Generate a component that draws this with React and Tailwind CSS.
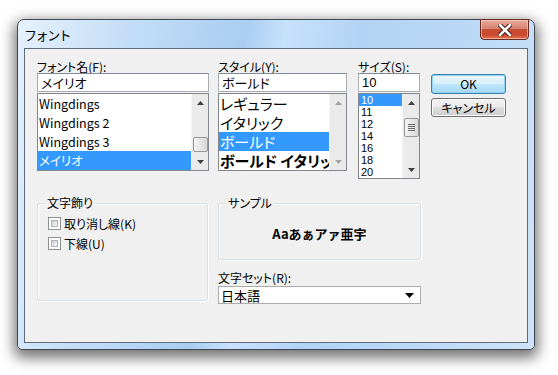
import React from "react";

const F = { fontFamily: '"Noto Sans CJK JP", "Noto Sans", sans-serif' };
const NUM = { fontFamily: '"Liberation Sans", "Noto Sans CJK JP", sans-serif' };

function Arrow({ dir = "up", color = "#404040" }) {
  return (
    <svg width="7" height="4" viewBox="0 0 7 4" className="block">
      {dir === "up" ? (
        <polygon points="0,4 7,4 3.5,0" fill={color} />
      ) : (
        <polygon points="0,0 7,0 3.5,4" fill={color} />
      )}
    </svg>
  );
}

function ScrollBar({ thumbTop, thumbH, grip = false, disabled = false }) {
  const c = disabled ? "#a3a3a3" : "#404040";
  return (
    <div className="relative w-[17px] h-full bg-[#eaeaea] border-l border-[#f4f4f4] flex flex-col justify-between">
      <div className="h-[17px] flex items-center justify-center">
        <Arrow dir="up" color={c} />
      </div>
      <div className="h-[17px] flex items-center justify-center">
        <Arrow dir="down" color={c} />
      </div>
      {thumbH ? (
        <div
          className="absolute left-[1px] w-[15px] rounded-[2px] border border-[#979797] bg-gradient-to-r from-[#f4f4f4] to-[#d8d8d8] flex flex-col items-center justify-center gap-[1px]"
          style={{ top: thumbTop, height: thumbH }}
        >
          {grip && (
            <>
              <div className="w-[7px] h-[1px] bg-[#6a6a6a]" />
              <div className="w-[7px] h-[1px] bg-[#6a6a6a]" />
              <div className="w-[7px] h-[1px] bg-[#6a6a6a]" />
              <div className="w-[7px] h-[1px] bg-[#6a6a6a]" />
            </>
          )}
        </div>
      ) : null}
    </div>
  );
}

function Input({ value, w, num = false }) {
  return (
    <div
      className="h-[19px] border border-[#abadb3] border-t-[#7a8b9c] bg-white flex items-center pl-[3px] text-[13px] leading-none text-black"
      style={{ width: w, ...(num ? NUM : {}) }}
    >
      {value}
    </div>
  );
}

function Check({ label }) {
  return (
    <div className="flex items-center gap-[3px] h-[13px]">
      <div className="w-[13px] h-[13px] border border-[#8e8f8f] bg-white p-[2px]">
        <div className="w-full h-full bg-gradient-to-br from-[#cbcfd5] to-[#f6f6f6] border border-[#aeb3b9]" />
      </div>
      <span className="text-[12px] leading-none text-black">{label}</span>
    </div>
  );
}

function GroupBox({ label, w, h, children }) {
  return (
    <div
      className="relative rounded-[3px] border border-[#d5dfe5] shadow-[inset_1px_1px_0_#ffffff,1px_1px_0_#ffffff]"
      style={{ width: w, height: h }}
    >
      <div className="absolute -top-[8px] left-[7px] px-[2px] bg-[#f0f0f0] text-[12px] leading-[14px] text-black">
        {label}
      </div>
      {children}
    </div>
  );
}

function Button({ children, def = false }) {
  return (
    <div
      className={
        "w-[75px] rounded-[3px] border flex items-center justify-center text-[12px] leading-none text-black " +
        (def
          ? "h-[20px] border-[#3c7fb1] bg-[linear-gradient(#eaf6fd_0%,#d9f0fc_50%,#bee6fd_50%,#a7d9f5_100%)] shadow-[inset_0_0_0_1px_#8fd3f5]"
          : "h-[19px] border-[#707070] bg-[linear-gradient(#f2f2f2_0%,#ebebeb_50%,#dddddd_50%,#cfcfcf_100%)] shadow-[inset_0_0_0_1px_#fcfcfc]")
      }
    >
      {children}
    </div>
  );
}

export default function App() {
  return (
    <div className="w-[558px] h-[375px] bg-white overflow-hidden [font-feature-settings:'palt']" style={F}>
      <div className="pl-[17px] pt-[19px]">
        <div className="relative w-[518px] h-[331px] rounded-t-[7px] rounded-b-[5px] border border-[#3e4752] bg-[linear-gradient(100deg,#e6f1fc_0%,#c6dff7_18%,#aacdf1_40%,#c8e1fb_47%,#b3d3f4_60%,#bcd9f6_80%,#cfe3f7_100%)] shadow-[0_5px_14px_3px_rgba(0,0,0,0.55)]">
          {/* title bar */}
          <div className="h-[28px] flex items-center pl-[7px]">
            <span className="text-[13px] leading-none text-black tracking-[1px]">フォント</span>
          </div>
          {/* close button */}
          <div className="absolute -top-[1px] right-[5px] w-[49px] h-[21px] rounded-b-[4px] border border-[#6b2b23] bg-[linear-gradient(#e9a99b_0%,#d98473_45%,#c74d33_50%,#cc4a2e_80%,#e07a5c_100%)] shadow-[inset_0_0_0_1px_rgba(255,220,210,0.55)] flex items-center justify-center">
            <svg width="14" height="12" viewBox="0 0 14 12">
              <path d="M2 1 L12 11 M12 1 L2 11" stroke="#4a1a12" strokeWidth="4.6" strokeLinecap="square" />
              <path d="M2 1 L12 11 M12 1 L2 11" stroke="#ffffff" strokeWidth="2.6" strokeLinecap="square" />
            </svg>
          </div>
          {/* client area */}
          <div className="mx-[6px] w-[504px] h-[295px] border border-[#5e6c7d] bg-[#f0f0f0] pl-[12px] pt-[11px] text-black">
            {/* row 1 */}
            <div className="flex items-start">
              {/* font name */}
              <div className="w-[172px] flex flex-col">
                <div className="h-[13px] text-[12px] leading-[13px]">フォント名(F):</div>
                <Input value="メイリオ" w={172} />
                <div className="mt-[1px] h-[78px] border border-[#828790] bg-white flex">
                  <div className="flex-1 flex flex-col text-[12.5px]">
                    <div className="h-[19px] leading-[19px] pl-[1px]">Wingdings</div>
                    <div className="h-[19px] leading-[19px] pl-[1px]">Wingdings 2</div>
                    <div className="h-[19px] leading-[19px] pl-[1px]">Wingdings 3</div>
                    <div className="h-[19px] leading-[19px] pl-[1px] bg-[#3399ff] text-white">メイリオ</div>
                  </div>
                  <ScrollBar thumbTop={43} thumbH={15} />
                </div>
              </div>
              {/* style */}
              <div className="ml-[9px] w-[129px] flex flex-col">
                <div className="h-[13px] text-[12px] leading-[13px]">スタイル(Y):</div>
                <Input value="ボールド" w={129} />
                <div className="mt-[1px] h-[78px] border border-[#828790] bg-white flex">
                  <div className="flex-1 min-w-0 flex flex-col text-[15px] overflow-hidden">
                    <div className="h-[19px] leading-[19px] pl-[1px] whitespace-nowrap">レギュラー</div>
                    <div className="h-[19px] leading-[19px] pl-[1px] whitespace-nowrap">イタリック</div>
                    <div className="h-[19px] leading-[19px] pl-[1px] whitespace-nowrap bg-[#3399ff] text-white">ボールド</div>
                    <div className="h-[19px] leading-[19px] pl-[1px] whitespace-nowrap font-bold">ボールド イタリック</div>
                  </div>
                  <ScrollBar disabled />
                </div>
              </div>
              {/* size */}
              <div className="ml-[11px] w-[62px] flex flex-col">
                <div className="h-[13px] text-[12px] leading-[13px]">サイズ(S):</div>
                <Input value="10" w={62} num />
                <div className="mt-[1px] h-[86px] border border-[#828790] bg-white flex">
                  <div className="flex-1 flex flex-col text-[11px]" style={NUM}>
                    <div className="h-[12px] leading-[12px] pl-[2px] bg-[#3399ff] text-white">10</div>
                    <div className="h-[12px] leading-[12px] pl-[2px]">11</div>
                    <div className="h-[12px] leading-[12px] pl-[2px]">12</div>
                    <div className="h-[12px] leading-[12px] pl-[2px]">14</div>
                    <div className="h-[12px] leading-[12px] pl-[2px]">16</div>
                    <div className="h-[12px] leading-[12px] pl-[2px]">18</div>
                    <div className="h-[12px] leading-[12px] pl-[2px]">20</div>
                  </div>
                  <ScrollBar thumbTop={24} thumbH={19} grip />
                </div>
              </div>
              {/* buttons */}
              <div className="ml-[11px] mt-[14px] flex flex-col gap-[4px]">
                <Button def>OK</Button>
                <Button>キャンセル</Button>
              </div>
            </div>
            {/* row 2 */}
            <div className="mt-[24px] flex items-start">
              <GroupBox label="文字飾り" w={171} h={98}>
                <div className="pl-[10px] pt-[13px] flex flex-col gap-[7px]">
                  <Check label="取り消し線(K)" />
                  <Check label="下線(U)" />
                </div>
              </GroupBox>
              <div className="ml-[10px] flex flex-col">
                <GroupBox label="サンプル" w={203} h={57}>
                  <div className="h-full flex items-center justify-center pt-[4px] text-[13px] font-bold leading-none [font-feature-settings:normal]">
                    Aaあぁアァ亜宇
                  </div>
                </GroupBox>
                <div className="mt-[11px] h-[13px] text-[12px] leading-[13px]">文字セット(R):</div>
                <div className="mt-[2px] w-[203px] h-[18px] border border-[#acacac] bg-white flex items-center justify-between pl-[2px] pr-[6px] text-[13px] leading-none">
                  <span>日本語</span>
                  <svg width="9" height="5" viewBox="0 0 9 5">
                    <polygon points="0,0 9,0 4.5,5" fill="#000" />
                  </svg>
                </div>
              </div>
            </div>
          </div>
        </div>
      </div>
    </div>
  );
}
